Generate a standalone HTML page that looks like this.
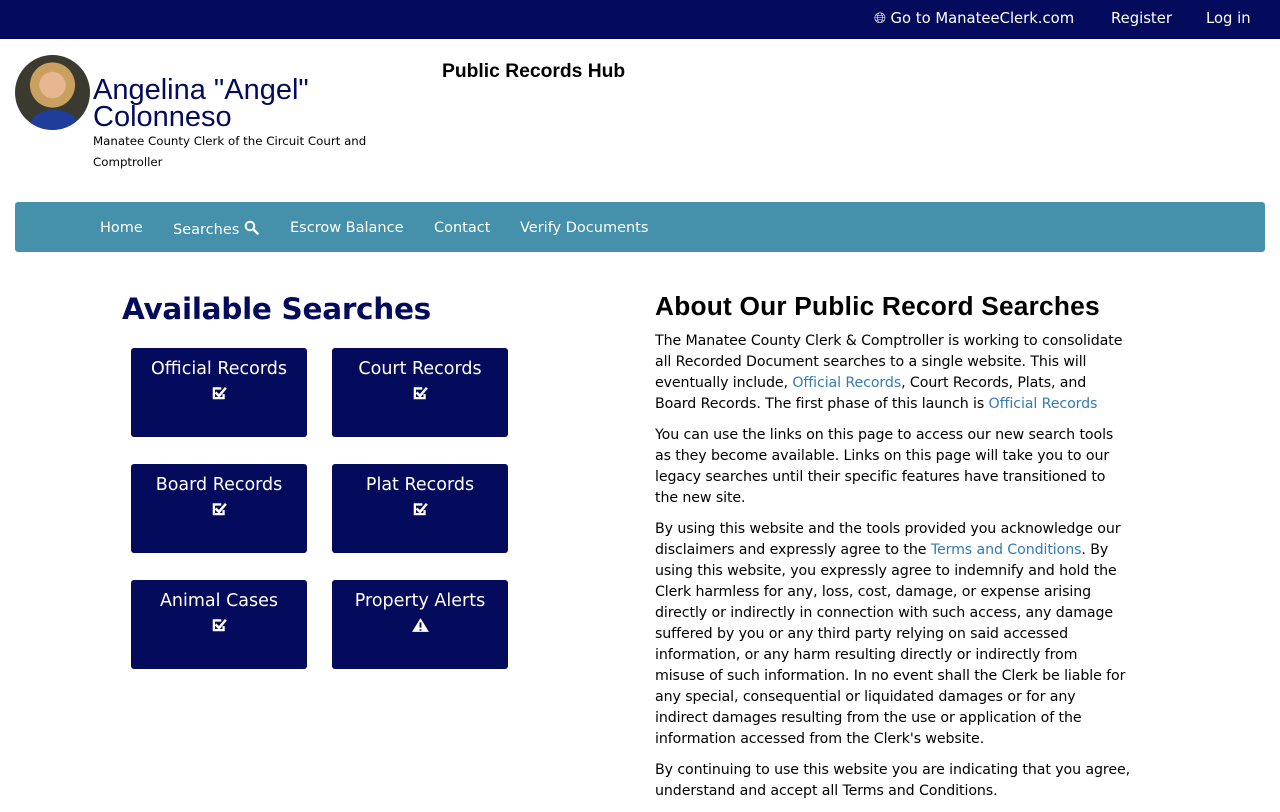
<!DOCTYPE html>
<html><head><meta charset="utf-8"><style>
*{box-sizing:border-box}
body{margin:0;width:1280px;height:800px;overflow:hidden;background:#fff;font-family:"DejaVu Sans","Liberation Sans",sans-serif;color:#000}
.top{height:39px;background:#040a5c;color:#fff;font-size:14.8px;position:relative}
.top span{position:absolute;top:10px}
.photo{position:absolute;left:15px;top:55px;width:75px;height:75px;border-radius:50%;background:radial-gradient(circle at 50% 40%,#e6b790 0 22%,#c9a060 23% 38%,#3a3a30 39%);overflow:hidden}
.photo:after{content:"";position:absolute;left:15px;top:55px;width:48px;height:30px;background:#1f3d9a;border-radius:50% 50% 0 0}
.name{position:absolute;left:93px;top:77px;font-family:"Liberation Sans",sans-serif;font-size:29px;line-height:27px;color:#040a5c}
.sub{position:absolute;left:93px;top:131px;font-size:11.8px;line-height:21px;width:300px}
.hub{position:absolute;left:442px;top:61px;font-weight:bold;font-size:19.3px;font-family:"Liberation Sans",sans-serif}
.nav{position:absolute;left:15px;top:202px;width:1250px;height:50px;background:#4590aa;border-radius:3px;color:#fff;font-size:14.5px}
.nav span{position:absolute;top:18px}
h1{position:absolute;left:122px;top:292px;margin:0;font-size:29.5px;color:#040a5c;font-family:"DejaVu Sans",sans-serif;letter-spacing:-.3px}
.btn{position:absolute;width:176px;height:89px;background:#040a5c;border-radius:3px;color:#fff;text-align:center;font-size:17.5px;padding-top:11px}
.btn svg{display:block;margin:6px auto 0}
.about{position:absolute;left:655px;top:291px;width:475px}
.about h2{margin:0 0 9px;font-size:26.3px;font-family:"Liberation Sans",sans-serif;letter-spacing:.2px}
.about p{margin:0 0 10px;font-size:14.2px;line-height:21px;letter-spacing:-.1px}
a{color:#337ab7;text-decoration:none}
</style></head><body>
<div class="top"><span style="left:874px">🌐︎ Go to ManateeClerk.com</span><span style="left:1111px">Register</span><span style="left:1206px">Log in</span></div>
<div class="photo"></div>
<div class="name">Angelina "Angel"<br>Colonneso</div>
<div class="sub">Manatee County Clerk of the Circuit Court and Comptroller</div>
<div class="hub">Public Records Hub</div>
<div class="nav"><span style="left:85px">Home</span><span style="left:158px">Searches <svg width="15" height="15" viewBox="0 0 15 15" style="vertical-align:-1px"><circle cx="6" cy="6" r="4.3" fill="none" stroke="#fff" stroke-width="2"/><path d="M9 9l4.5 4.5" stroke="#fff" stroke-width="2.5" stroke-linecap="round"/></svg></span><span style="left:275px">Escrow Balance</span><span style="left:419px">Contact</span><span style="left:505px">Verify Documents</span></div>
<h1>Available Searches</h1>
<div class="btn" style="left:131px;top:348px">Official Records<svg width="16" height="16" viewBox="0 0 14 14"><path d="M11 8v3.5H2.5V3H9" fill="none" stroke="#fff" stroke-width="2"/><path d="M4 6.5l3 3L13 2.5" fill="none" stroke="#fff" stroke-width="2.2"/></svg></div>
<div class="btn" style="left:332px;top:348px">Court Records<svg width="16" height="16" viewBox="0 0 14 14"><path d="M11 8v3.5H2.5V3H9" fill="none" stroke="#fff" stroke-width="2"/><path d="M4 6.5l3 3L13 2.5" fill="none" stroke="#fff" stroke-width="2.2"/></svg></div>
<div class="btn" style="left:131px;top:464px">Board Records<svg width="16" height="16" viewBox="0 0 14 14"><path d="M11 8v3.5H2.5V3H9" fill="none" stroke="#fff" stroke-width="2"/><path d="M4 6.5l3 3L13 2.5" fill="none" stroke="#fff" stroke-width="2.2"/></svg></div>
<div class="btn" style="left:332px;top:464px">Plat Records<svg width="16" height="16" viewBox="0 0 14 14"><path d="M11 8v3.5H2.5V3H9" fill="none" stroke="#fff" stroke-width="2"/><path d="M4 6.5l3 3L13 2.5" fill="none" stroke="#fff" stroke-width="2.2"/></svg></div>
<div class="btn" style="left:131px;top:580px">Animal Cases<svg width="16" height="16" viewBox="0 0 14 14"><path d="M11 8v3.5H2.5V3H9" fill="none" stroke="#fff" stroke-width="2"/><path d="M4 6.5l3 3L13 2.5" fill="none" stroke="#fff" stroke-width="2.2"/></svg></div>
<div class="btn" style="left:332px;top:580px">Property Alerts<svg width="19" height="16" viewBox="0 0 18 15"><path d="M9 1L17 14H1z" fill="#fff"/><path d="M9 5v5M9 11.5v1.5" stroke="#040a5c" stroke-width="1.8"/></svg></div>
<div class="about"><h2>About Our Public Record Searches</h2>
<p>The Manatee County Clerk &amp; Comptroller is working to consolidate all Recorded Document searches to a single website. This will eventually include, <a>Official Records</a>, Court Records, Plats, and Board Records. The first phase of this launch is <a>Official Records</a></p>
<p>You can use the links on this page to access our new search tools as they become available. Links on this page will take you to our legacy searches until their specific features have transitioned to the new site.</p>
<p>By using this website and the tools provided you acknowledge our disclaimers and expressly agree to the <a>Terms and Conditions</a>. By using this website, you expressly agree to indemnify and hold the Clerk harmless for any, loss, cost, damage, or expense arising directly or indirectly in connection with such access, any damage suffered by you or any third party relying on said accessed information, or any harm resulting directly or indirectly from misuse of such information. In no event shall the Clerk be liable for any special, consequential or liquidated damages or for any indirect damages resulting from the use or application of the information accessed from the Clerk's website.</p>
<p>By continuing to use this website you are indicating that you agree, understand and accept all Terms and Conditions.</p></div>
</body></html>
